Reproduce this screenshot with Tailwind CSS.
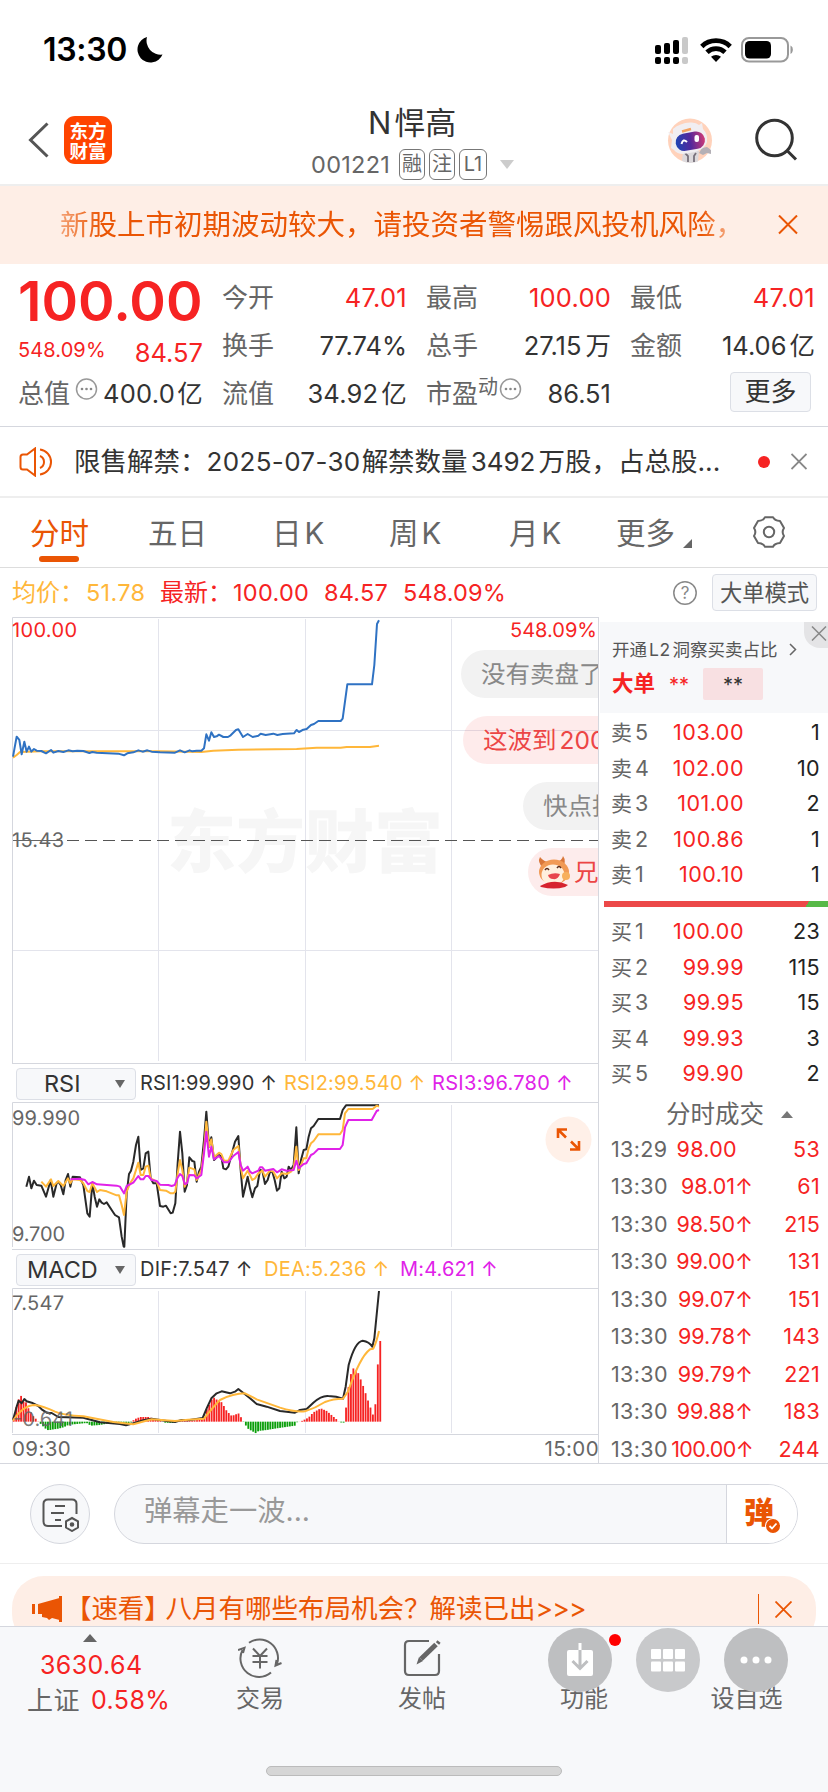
<!DOCTYPE html>
<html lang="zh-CN">
<head>
    <meta charset="UTF-8">
    <meta name="viewport" content="width=device-width, initial-scale=1.0">
    <title>N悍高 001221</title>
    <script src="https://cdn.jsdelivr.net/npm/@tailwindcss/browser@4"></script>
</head>
<body class="w-[828px] h-[1792px] overflow-hidden bg-white text-[#333] font-[Inter,'Noto_Sans_CJK_SC',sans-serif] leading-none whitespace-nowrap">
    <!-- Barre d'état -->
    <div class="h-[90px] pl-[43px] pr-[34px] pt-[10px] flex items-center justify-between text-black">
        <div class="flex items-center">
            <p class="w-[94px] text-[32px] font-semibold tracking-[-0.3px]">13:30</p>
            <svg width="26" height="26" viewBox="0 0 26 26"><path d="M10 0A13 13 0 1 0 25.500 17.500A14 14 0 0 1 10 0z" fill="#000"/></svg>
        </div>
        <div class="flex items-center">
            <svg width="34" height="27" viewBox="0 0 34 27">
                <rect x="0" y="8" width="6" height="9" rx="2"/><rect x="9" y="6" width="6" height="11" rx="2"/><rect x="18" y="3" width="6" height="14" rx="2"/><rect x="27" y="0" width="6" height="17" rx="2" fill="#c9c9c9"/>
                <rect x="0" y="20" width="6" height="7" rx="2"/><rect x="9" y="20" width="6" height="7" rx="2"/><rect x="18" y="20" width="6" height="7" rx="2"/><rect x="27" y="20" width="6" height="7" rx="2" fill="#c9c9c9"/>
            </svg>
            <svg class="ml-[11px]" width="32" height="24" viewBox="0 0 32 24" fill="none" stroke="#000" stroke-width="4.800">
                <path d="M1.800 8.400A20.500 20.500 0 0 1 30.200 8.400"/><path d="M7 14.200A13 13 0 0 1 25 14.200"/><path d="M16 24L11 18.800A7.500 7.500 0 0 1 21 18.800z" fill="#000" stroke="none"/>
            </svg>
            <svg class="ml-[9px]" width="53" height="26" viewBox="0 0 53 26">
                <rect x="1" y="1" width="46" height="23.500" rx="7" fill="none" stroke="#999" stroke-width="2"/><rect x="4" y="4" width="26" height="17.500" rx="4.500"/><path d="M49.500 8.500a5 5 0 0 1 0 8.500z" fill="#999"/>
            </svg>
        </div>
    </div>

    <!-- En-tête -->
    <div class="h-[94px] flex items-start">
        <svg class="ml-[27px] mt-[31px]" width="23" height="38" viewBox="0 0 23 38" fill="none" stroke="#555" stroke-width="3"><path d="M20.500 2.500L3.500 19L20.500 35.500"/></svg>
        <div class="ml-[14px] mt-[26px] size-12 rounded-[11px] bg-[#ff4400] text-white font-bold text-[18.500px] leading-[20px] pt-[4px] text-center font-['Noto_Sans_CJK_SC',sans-serif]">东方<br>财富</div>
        <div class="ml-[199px] w-[204px] flex flex-col">
            <p class="mt-[17px] h-8 text-[31px] leading-8 pl-[57px]">N<span class="ml-[3px]">悍高</span></p>
            <div class="mt-[10px] h-[31px] flex items-center text-[#666]">
                <p class="w-[88px] text-[23.500px] tracking-[0.3px] leading-[31px]">001221</p>
                <p class="w-[26px] h-[31px] border border-[#777] rounded-[6px] text-[20px] leading-[29px] text-center">融</p>
                <p class="ml-[4px] w-[26px] h-[31px] border border-[#777] rounded-[6px] text-[20px] leading-[29px] text-center">注</p>
                <p class="ml-[4px] w-[28px] h-[31px] border border-[#777] rounded-[6px] text-[20px] leading-[29px] text-center">L1</p>
                <svg class="ml-[13px]" width="14" height="9" viewBox="0 0 14 9"><path d="M0 0H14L7 9z" fill="#ccc"/></svg>
            </div>
        </div>
        <svg class="ml-[152px] mt-[27px]" width="48" height="48" viewBox="0 0 48 48">
            <circle cx="23" cy="23.500" r="22" fill="#ffd2bb"/>
            <path d="M16 34L15 44Q23 47.500 31 44.500L32 34z" fill="#dcd9dc"/>
            <path d="M18 36l3 3v6M29 36l-2 3v6" stroke="#77707a" stroke-width="1.800" fill="none"/>
            <path d="M32 36L36 38L40 36L44 37L44 33L40 30L35 31z" fill="#b4b0b6"/>
            <path d="M1 15L6 17V12Q13 6 23 5.500Q29 5 32 8L35 6L36 12Q41 17 40 25Q38 32 28 35L16 37Q10 37 7 33L4 31L5 23z" fill="#f1eef1"/>
            <rect x="8.500" y="15.500" width="29.500" height="17.500" rx="8.700" fill="url(#visor)" transform="rotate(-10 23 24)"/>
            <path d="M14.500 27q1.500-6 5.500-2" stroke="#fff" stroke-width="2" fill="none"/><rect x="27.500" y="18" width="4.500" height="7" rx="2" fill="#fff"/>
            <path d="M15 14.500L24 12" stroke="#f3a261" stroke-width="2.500"/>
            <defs><linearGradient id="visor"><stop offset="0" stop-color="#1f46b4"/><stop offset=".5" stop-color="#52289c"/><stop offset="1" stop-color="#cf3a76"/></linearGradient></defs>
        </svg>
        <svg class="ml-[40px] mt-[28px]" width="44" height="44" viewBox="0 0 44 44" fill="none" stroke="#333" stroke-width="3"><circle cx="19.500" cy="20" r="17.800"/><path d="M32 32.500L41 41.500"/></svg>
    </div>

    <!-- Avertissement -->
    <div class="h-[80px] border-t-2 border-[#eee] bg-[#feeee6] text-[#ea5504] flex items-center pl-[60px]">
        <p class="w-[690px] overflow-hidden text-[28.500px] leading-[44px] mask-[linear-gradient(to_right,rgb(0_0_0/.5),#000_6%,#000_93%,transparent)]">新股上市初期波动较大，请投资者警惕跟风投机风险，</p>
        <svg class="ml-[28px]" width="20" height="20" viewBox="0 0 20 20" stroke="#ea5504" stroke-width="2"><path d="M1 .500L19 18.500M19 .500L1 18.500"/></svg>
    </div>

    <!-- Cotation -->
    <div class="h-[163px] border-b border-[#d5d7de] pt-[10px] pl-[19px] grid grid-cols-[184px_185px_185px_185px] gap-x-[19px] grid-rows-[48px_48px_47px] items-center text-[25.500px]">
        <p class="-ml-[1px] text-[55.500px] font-semibold text-[#f62323] pt-[5px]">100.00</p>
        <div class="flex justify-between"><p class="text-[26px] text-[#666]">今开</p><p class="text-[#f62323] tracking-[0.3px]">47.01</p></div>
        <div class="flex justify-between"><p class="text-[26px] text-[#666]">最高</p><p class="text-[#f62323] tracking-[0.2px]">100.00</p></div>
        <div class="flex justify-between"><p class="text-[26px] text-[#666]">最低</p><p class="text-[#f62323] tracking-[0.3px]">47.01</p></div>

        <div class="flex justify-between items-center text-[#f62323] pt-[8px]"><p class="-ml-[1px] text-[20px] tracking-[0.1px]">548.09%</p><p class="pt-[5px]">84.57</p></div>
        <div class="flex justify-between"><p class="text-[26px] text-[#666]">换手</p><p>77.74%</p></div>
        <div class="flex justify-between"><p class="text-[26px] text-[#666]">总手</p><p>27.15<span class="ml-1">万</span></p></div>
        <div class="flex justify-between"><p class="text-[26px] text-[#666]">金额</p><p>14.06<span class="ml-[3px]">亿</span></p></div>

        <div class="flex justify-between"><p class="-ml-[1px] text-[26px] text-[#666]">总值</p>
            <svg class="-mt-[4px]" width="23" height="24" viewBox="0 0 23 24"><circle cx="11.500" cy="12" r="10" fill="none" stroke="#999" stroke-width="1.500"/><g fill="#888"><circle cx="7" cy="12" r="1.300"/><circle cx="11.500" cy="12" r="1.300"/><circle cx="16" cy="12" r="1.300"/></g></svg>
            <p class="tracking-[0.3px]">400.0<span class="ml-[2px]">亿</span></p></div>
        <div class="flex justify-between"><p class="text-[26px] text-[#666]">流值</p><p class="tracking-[0.2px]">34.92<span class="ml-[3px]">亿</span></p></div>
        <div class="flex justify-between"><div class="flex"><p class="text-[26px] text-[#666]">市盈</p><p class="text-[20px] text-[#666] -mt-[4px]">动</p>
            <svg class="-mt-[4px] ml-[1px]" width="23" height="24" viewBox="0 0 23 24"><circle cx="11.500" cy="12" r="10" fill="none" stroke="#999" stroke-width="1.500"/><g fill="#888"><circle cx="7" cy="12" r="1.300"/><circle cx="11.500" cy="12" r="1.300"/><circle cx="16" cy="12" r="1.300"/></g></svg></div>
            <p>86.51</p></div>
        <p class="justify-self-end mr-[4px] -mt-[3px] w-[81px] h-[40px] border border-[#dcdfe6] rounded-[4px] bg-[#f7f8fa] text-[26px] leading-[38px] text-center">更多</p>
    </div>

    <!-- Annonce -->
    <div class="h-[71px] border-b-2 border-[#eee] flex items-center">
        <svg class="ml-[19px]" width="36" height="30" viewBox="0 0 36 30" fill="none" stroke="#ea5504" stroke-width="2"><path d="M16 1.500V28.500L8 22.500H4Q1.500 22.500 1.500 20V10Q1.500 7.500 4 7.500H8z"/><path d="M21 9A6.500 6.500 0 0 1 21 21M21 2.500A12.600 12.600 0 0 1 21 27.500"/></svg>
        <p class="ml-[19px] w-[660px] text-[26.500px]">限售解禁：<span class="tracking-[0.35px] text-[26px]">2025-07-30</span><span class="ml-[1px]">解禁数量</span><span class="ml-[3px] text-[26px]">3492</span><span class="ml-[3px]">万股，占总股...</span></p>
        <div class="ml-[24px] size-[12px] rounded-full bg-[#f62323]"></div>
        <svg class="ml-[21px]" width="16" height="17" viewBox="0 0 16 17" stroke="#888" stroke-width="1.800"><path d="M.500 1L15.500 16M15.500 1L.500 16"/></svg>
    </div>

    <!-- Onglets -->
    <div class="h-[70px] border-b border-[#ddd] flex items-start text-[29.500px] leading-[70px] text-[#666]">
        <div class="ml-[30px] w-[118px] text-[#ea5504]"><p class="h-[58px]">分时</p><div class="ml-[9px] w-[40px] h-[6px] rounded-[3px] bg-[#ea5504]"></div></div>
        <p class="w-[124px]">五日</p>
        <p class="w-[117px]">日<span class="ml-[3px]">K</span></p>
        <p class="w-[120px]">周<span class="ml-[3px]">K</span></p>
        <p class="w-[107px]">月<span class="ml-[3px]">K</span></p>
        <p class="w-[67px]">更多</p>
        <svg class="mt-[41px]" width="9" height="9" viewBox="0 0 9 9"><path d="M9 0V9H0z" fill="#666"/></svg>
        <svg class="ml-[60px] mt-[18px]" width="34" height="32" viewBox="-17 -16 34 32" fill="none" stroke="#666" stroke-width="2" stroke-linejoin="round"><path d="M-4 -14.800H4Q5.500 -11.300 11 -11L15 -4Q12.300 0 15 4L11 11Q5.500 11.300 4 14.800H-4Q-5.500 11.300 -11 11L-15 4Q-12.300 0 -15 -4L-11 -11Q-5.500 -11.300 -4 -14.800z"/><circle r="5.200"/></svg>
    </div>

    <!-- Prix moyen et dernier prix -->
    <div class="h-[49px] flex items-center text-[23.500px] text-[#f62323]">
        <p class="ml-[12px] w-[74px] text-[#ffb73a] text-[24px]">均价：</p><p class="w-[74px] text-[#ffb73a] tracking-[0.3px]">51.78</p>
        <p class="w-[73px] text-[24px]">最新：</p><p class="w-[91px] tracking-[0.3px]">100.00</p><p class="w-[79px] tracking-[0.2px]">84.57</p><p class="w-[269px] tracking-[0.1px]">548.09%</p>
        <svg width="26" height="26" viewBox="0 0 26 26"><circle cx="13" cy="13" r="11.200" fill="none" stroke="#888" stroke-width="1.500"/><text x="13" y="19" text-anchor="middle" font-size="17" fill="#888">?</text></svg>
        <p class="ml-[14px] w-[105px] h-[37px] border border-[#dcdfe6] rounded-[4px] bg-[#f7f8fa] text-[#555] text-[22.300px] leading-[35px] text-center">大单模式</p>
    </div>

    <!-- Graphiques et carnet d'ordres -->
    <div class="h-[847px] flex border-b border-[#d5d7de]">
        <div class="w-[599px] pl-[12px] border-r border-[#d5d7de]">
            <svg class="block" width="586" height="447" viewBox="12 617 586 447" text-rendering="geometricPrecision">
                <g stroke="#e3e4ec"><path d="M158.500 619V1061M305.500 619V1061M451.500 619V1061M12 730.500H598M12 950.500H598"/></g>
                <text x="167" y="867" font-size="69" font-weight="900" fill="#f6f6f6" textLength="276">东方财富</text>
                <path d="M12.500 1064V617.500H598M12 1063.500H598" stroke="#d5d7de" fill="none"/>
                <path d="M13 840.500H62" stroke="#666"/><path d="M67 840.500H598" stroke="#555" stroke-dasharray="12 6"/>
                <text x="12" y="847" font-size="20" fill="#666" textLength="52">15.43</text>
                <text x="12" y="637" font-size="20" fill="#f62323" textLength="65">100.00</text>
                <text x="510" y="637" font-size="20" fill="#f62323" textLength="87">548.09%</text>
                <g transform="translate(0 600) scale(.33333)" fill="none" stroke-width="6" stroke-linejoin="round">
                    <polyline stroke="#ffb73a" points="39,473 50,465 60,456 124,454 300,454 480,454 604,456 640,452 715,449 890,447 950,443 1022,443 1040,441 1110,441 1137,437"/>
                    <polyline stroke="#2f72c3" points="39,470 50,410 58,420 65,463 73,425 80,455 87,440 94,455 102,447 110,452 124,453 138,460 153,450 160,458 175,453 190,456 205,451 218,454 232,452 250,453 268,459 277,456 290,458 355,461 372,466 382,460 400,457 415,451 428,455 442,451 455,455 480,457 525,458 540,451 554,457 569,451 577,454 590,452 604,452 612,445 619,403 627,422 634,397 642,411 650,409 657,404 670,411 684,411 692,406 708,390 715,388 729,411 743,402 758,411 775,407 782,401 797,405 820,401 832,405 848,402 882,400 890,390 897,396 910,389 920,387 933,375 942,372 955,363 1022,363 1028,356 1042,253 1116,253 1123,195 1131,72 1137,61"/>
                </g>
                <g font-size="24.500">
                    <rect x="461" y="650" width="180" height="48" rx="24" fill="#f2f2f2"/><text x="481" y="683" fill="#888">没有卖盘了</text>
                    <rect x="463" y="716" width="180" height="48" rx="24" fill="#fa3c3c" opacity=".1"/><text x="483" y="749" fill="#ec4545">这波到<tspan dx="3">200</tspan></text>
                    <rect x="523" y="782" width="180" height="48" rx="24" fill="#f2f2f2"/><text x="543" y="815" fill="#888">快点抄</text>
                    <rect x="528" y="848" width="180" height="48" rx="24" fill="#fdecec"/><text x="574" y="881" fill="#ec4545">兄弟</text>
                </g>
                <!-- petit boeuf -->
                <path d="M543 868Q537 862 540 857Q544 862 549 862zM556 862Q562 861 563 856Q567 861 562 869z" fill="#d9773a"/>
                <ellipse cx="554" cy="872" rx="15" ry="12.500" fill="#f19a55"/><ellipse cx="553" cy="875" rx="11.500" ry="10.500" fill="#fff0de"/>
                <path d="M540 886Q554 878 568 885L565 887Q554 890 541 887z" fill="#d6232f"/>
                <path d="M548 875Q554 872 560 874Q558 880 553 879Q549 879 548 875z" fill="#e8464c"/>
                <path d="M545 870q2-3 4 0M557 868q2-3 4 0" fill="none" stroke="#5b2b1b" stroke-width="1.500"/><circle cx="566" cy="876" r="4" fill="#f7b05c"/>
            </svg>
            <div class="h-[38px] flex items-center text-[20px]">
                <div class="ml-[4px] mt-[1px] w-[120px] h-[32px] border border-[#dcdfe6] rounded-[4px] bg-[#f7f8fa] flex items-center"><p class="w-[98px] pl-[27px] text-[23.500px]">RSI</p><svg width="10" height="8" viewBox="0 0 10 8"><path d="M0 0H10L5 8z" fill="#666"/></svg></div>
                <p class="ml-[4px] w-[144px] tracking-[0.2px]">RSI1:99.990 ↑</p><p class="w-[148px] text-[#ffb73a] tracking-[0.2px]">RSI2:99.540 ↑</p><p class="text-[#e022e8] tracking-[0.3px]">RSI3:96.780 ↑</p>
            </div>
            <svg class="block" width="586" height="147" viewBox="12 1102 586 147" text-rendering="geometricPrecision">
                <path d="M158.500 1105V1247M305.500 1105V1247M451.500 1105V1247" stroke="#e3e4ec"/>
                <path d="M12.500 1247V1102.500H598" stroke="#d5d7de" fill="none"/>
                <text x="12" y="1125" font-size="20" fill="#666" textLength="68">99.990</text>
                <text x="12" y="1241" font-size="20" fill="#666" textLength="53">9.700</text>
                <g transform="translate(0 1050) scale(.33333)" fill="none" stroke-width="6" stroke-linejoin="round">
                    <polyline stroke="#292929" points="79,410 87,380 94,415 102,392 110,405 124,407 138,440 152,390 160,440 170,400 175,395 182,405 190,433 197,390 204,372 211,410 218,380 240,382 250,405 262,490 269,500 277,400 284,440 291,470 298,448 305,458 312,462 320,457 335,480 345,495 357,502 365,560 371,590 373,590 380,430 387,372 393,362 400,335 408,285 415,260 422,360 430,355 437,310 445,305 452,385 460,400 470,400 480,468 490,470 498,467 512,490 518,488 526,460 533,340 540,245 547,310 554,425 561,405 568,322 577,333 583,335 590,395 597,365 604,350 612,270 619,185 627,290 634,262 642,330 657,315 664,320 670,355 678,358 685,350 693,320 705,275 715,258 722,360 729,440 736,410 743,380 750,415 757,442 765,415 772,408 780,360 787,362 795,402 803,390 810,365 817,365 824,390 831,422 838,415 845,365 853,385 860,380 866,350 873,360 881,345 889,232 896,370 903,330 911,300 919,298 926,260 933,235 941,228 955,207 1020,207 1028,180 1038,166 1137,166"/>
                    <polyline stroke="#ffb73a" points="124,395 138,410 153,388 160,408 175,393 190,408 204,385 211,400 218,388 240,390 250,400 262,423 269,426 277,400 291,426 300,420 320,424 350,436 357,436 365,465 372,495 380,425 390,400 400,385 415,338 422,375 430,375 437,350 445,347 452,385 470,395 480,420 498,422 512,430 520,430 526,425 533,370 540,330 547,360 554,410 561,395 568,353 583,358 590,390 604,360 612,300 619,215 627,290 634,268 642,322 657,308 664,312 672,332 685,332 700,300 715,288 722,350 729,385 743,362 757,390 765,385 775,370 787,362 795,380 810,362 820,365 831,385 845,370 860,372 873,365 881,355 889,290 896,360 903,345 911,325 919,325 926,295 933,280 941,273 955,253 1020,253 1028,240 1035,190 1045,177 1118,177 1130,167 1137,170"/>
                    <polyline stroke="#e022e8" points="211,388 240,386 255,390 265,403 277,396 291,403 350,407 360,410 372,430 380,408 400,398 415,378 422,388 430,388 437,378 445,378 455,390 470,393 480,404 505,405 515,408 524,405 532,385 540,372 547,378 554,402 561,400 568,375 583,376 590,385 604,375 612,310 619,245 627,320 634,290 642,328 657,318 672,337 685,337 700,318 715,306 722,345 729,362 743,350 750,365 757,370 775,362 780,352 787,352 795,362 820,357 831,367 845,358 860,362 881,360 889,332 896,355 911,342 919,340 933,315 941,311 955,297 1020,297 1028,285 1035,232 1045,210 1115,210 1130,183 1137,180"/>
                </g>
                <circle cx="568.500" cy="1139.500" r="23" fill="#fff0e8"/>
                <path d="M558 1138V1129.500H567M559 1130.500L566 1137.500M579 1141V1149.500H570M578 1148.500L571 1141.500" stroke="#ea5504" stroke-width="2.600" fill="none"/>
            </svg>
            <div class="h-[39px] border-t border-[#d5d7de] flex items-center text-[20px]">
                <div class="ml-[4px] mt-[1px] w-[120px] h-[32px] border border-[#dcdfe6] rounded-[4px] bg-[#f7f8fa] flex items-center"><p class="w-[98px] pl-[10px] text-[23.500px]">MACD</p><svg width="10" height="8" viewBox="0 0 10 8"><path d="M0 0H10L5 8z" fill="#666"/></svg></div>
                <p class="ml-[4px] w-[124px] tracking-[0.2px]">DIF:7.547 ↑</p><p class="w-[136px] text-[#ffb73a] tracking-[0.25px]">DEA:5.236 ↑</p><p class="text-[#e022e8] tracking-[0.15px]">M:4.621 ↑</p>
            </div>
            <svg class="block" width="586" height="147" viewBox="12 1288 586 147" text-rendering="geometricPrecision">
                <path d="M158.500 1291V1433M305.500 1291V1433M451.500 1291V1433" stroke="#e3e4ec"/>
                <path d="M12.500 1433V1288.500H598M12 1434.500H598" stroke="#d5d7de" fill="none"/>
                <g id="macd-bars" transform="translate(0 1250) scale(.33333)"></g>
                <g transform="translate(0 1250) scale(.33333)" fill="none" stroke-width="6" stroke-linejoin="round">
                    <path stroke="#292929" d="M39 510L50 470L56 452L65 460L73 447L80 454L95 458L115 468L125 478L140 488L155 489L175 501L250 503L300 517L360 522L378 526L400 520L430 511L455 506L500 513L525 516L545 510L565 511L608 504L620 475L634 445L650 430L665 424L690 430L705 425L715 417L735 433L750 445L770 462L800 470L840 483L885 488L900 480L920 477L940 458Q965 436 985 438Q1010 439 1029 446L1037 410L1046 345Q1065 275 1088 272Q1108 275 1117 290L1123 265L1137 123"/>
                    <path stroke="#ffb73a" d="M39 512Q70 465 105 465Q130 468 165 485Q190 496 250 499L340 516L400 523L455 508L525 513L565 509L612 506Q640 470 660 450Q700 430 735 430L770 448L840 473Q885 487 915 484Q945 475 975 456Q1000 446 1029 446L1044 425Q1080 320 1110 298L1120 296Q1130 275 1137 243"/>
                </g>
                <text x="12" y="1310" font-size="20" fill="#666" textLength="52">7.547</text>
                <text x="13" y="1426" font-size="20" fill="#666" fill-opacity=".85" textLength="60">-0.641</text>
            </svg>
            <div class="h-[28px] -mr-[1px] flex justify-between items-center text-[20.500px] text-[#666] tracking-[0.4px]"><p>09:30</p><p>15:00</p></div>
        </div>

        <!-- Carnet d'ordres -->
        <div class="w-[229px]">
            <div class="mt-[5px] ml-[1px] h-[91px] bg-[#f7f8fa] flex text-[#555]">
                <div class="pl-[12px] pt-[19px] w-[204px]">
                    <div class="flex items-center text-[17.500px]"><p class="w-[177px]">开通<span class="mx-[2px] tracking-[0.5px]">L2</span>洞察买卖占比</p><svg width="8" height="13" viewBox="0 0 8 13" fill="none" stroke="#666" stroke-width="1.500"><path d="M1 1L6.500 6.500L1 12"/></svg></div>
                    <div class="mt-[9px] flex items-center"><p class="w-[57px] text-[21.500px] font-bold text-[#f62323]">大单</p><p class="w-[34px] pt-[2px] text-[20px] text-[#f62323]">**</p><p class="w-[60px] h-[32px] rounded-[2px] bg-[#f8e0e2] text-[#333] text-[20px] leading-[34px] text-center">**</p></div>
                </div>
                <div class="w-[24px] h-[26px] rounded-bl-[16px] bg-[#e4e4e6] pl-[7px] pt-[4px]"><svg width="16" height="15" viewBox="0 0 16 15" stroke="#888" stroke-width="1.500"><path d="M1 .500L15 14.500M15 .500L1 14.500"/></svg></div>
            </div>
            <div class="mt-[2px] pl-[12px] text-[21.500px]" id="asks"></div>
            <div class="mt-[8px] ml-[5px] h-[6px] bg-[linear-gradient(125deg,#ec4848_90%,#57b947_90%)]"></div>
            <div class="mt-[7px] pl-[12px] text-[21.500px]" id="bids"></div>
            <div class="h-[39px] pt-[6px] pl-[67px] flex items-center text-[24.500px] text-[#666]"><p class="w-[115px]">分时成交</p><svg width="12" height="7" viewBox="0 0 12 7"><path d="M6 0L12 7H0z" fill="#777"/></svg></div>
            <div class="pl-[12px] text-[21.500px]" id="trades"></div>
        </div>
    </div>

    <!-- Saisie du commentaire -->
    <div class="h-[100px] border-b border-[#eee] flex items-center">
        <div class="ml-[30px] size-[60px] rounded-full border border-[#d5d7de] bg-[#f7f8fa] flex items-center justify-center">
            <svg class="ml-[2px] mt-[2px]" width="38" height="34" viewBox="0 0 38 34" fill="none" stroke="#555" stroke-width="2"><path d="M20 28H6Q1.500 28 1.500 23.500V6Q1.500 1.500 6 1.500H30Q34.500 1.500 34.500 6V16M13 8H23M9 15H22M13 22H19"/><path d="M30 20L36 23.300V29.500L30 33L24 29.500V23.300z"/><circle cx="30" cy="26.500" r="1.300" fill="#555"/></svg>
        </div>
        <div class="ml-[24px] w-[684px] h-[60px] rounded-full border border-[#d5d7de] bg-[#f7f8fa] flex overflow-hidden">
            <p class="w-[612px] border-r border-[#d5d7de] pl-[29px] text-[28.300px] leading-[53px] text-[#999]">弹幕走一波...</p>
            <div class="flex-1 bg-white relative text-[#ea5504]"><p class="pl-[17px] text-[30px] font-black leading-[54px]">弹</p>
                <svg class="absolute left-[38px] top-[33px]" width="16" height="16" viewBox="0 0 16 16"><circle cx="8" cy="8" r="8" fill="#fff"/><circle cx="8" cy="8" r="7" fill="#ea5504"/><path d="M4.500 8L7 10.500L11.500 5.500" fill="none" stroke="#fff" stroke-width="1.800"/></svg>
            </div>
        </div>
    </div>

    <!-- Promotion -->
    <div class="h-[62px] pt-[12px] px-[12px] overflow-hidden">
        <div class="h-[70px] rounded-[32px] bg-[#feeee6] text-[#ea5504] flex items-start">
            <svg class="ml-[20px] mt-[20px]" width="31" height="27" viewBox="0 0 31 27" fill="#ea5504"><rect x="0" y="8" width="3" height="10"/><path d="M6 8L27.500 2V24L20 22L17 24L15 22L10 21V18H6z"/><rect x="27" y="0" width="3" height="26"/></svg>
            <p class="ml-[2px] w-[693px] text-[26.500px] leading-[64px]"><span class="tracking-[-0.1px]">【速看】</span><span class="-ml-[5px]">八月有哪些布局机会？</span><span class="-ml-[1px]">解读已出</span><span class="tracking-[-0.8px]">&gt;&gt;&gt;</span></p>
            <div class="mt-[18px] w-[1px] h-[30px] bg-[#ea5504]"></div>
            <svg class="ml-[16px] mt-[25px]" width="17" height="17" viewBox="0 0 17 17" stroke="#ea5504" stroke-width="1.800"><path d="M.500 .500L16.500 16.500M16.500 .500L.500 16.500"/></svg>
        </div>
    </div>

    <!-- Barre de navigation -->
    <div class="relative h-[166px] border-t border-[#d5d7de] bg-[#f7f8fa] text-[24px] text-[#666]">
        <div class="flex">
            <div class="w-[179px] text-[#f62323] text-[25px] tracking-[0.4px]">
                <svg class="ml-[83px] mt-[7px]" width="14" height="8" viewBox="0 0 14 8"><path d="M7 0L14 8H0z" fill="#666"/></svg>
                <p class="ml-[40px] mt-[11px]">3630.64</p>
                <div class="ml-[27px] mt-[10px] flex"><p class="w-[64px] text-[26px] text-[#666]">上证</p><p>0.58%</p></div>
            </div>
            <div class="w-[162px] flex flex-col items-center">
                <svg class="mt-[11px]" width="44" height="40" viewBox="0 0 44 40" fill="none" stroke="#666" stroke-width="2"><path d="M11 4.800A18.500 18.500 0 0 1 39 26M33 34.500A18.500 18.500 0 0 1 4.500 12M0 12L6.500 9.800L5 15M43.500 25L37.500 27.500L38.500 22"/><path d="M15 10.500L22 18L29 10.500M22 18V30.500M14.500 18H29.500M14.500 24H29.500"/></svg>
                <p class="mt-[9px]">交易</p>
            </div>
            <div class="w-[162px] flex flex-col items-center">
                <svg class="mt-[12px]" width="38" height="38" viewBox="0 0 38 38" fill="none" stroke="#666" stroke-width="2.200"><path d="M26 2H6Q2 2 2 6V32Q2 36 6 36H32Q36 36 36 32V15"/><path d="M33 5.500L18 20" stroke-width="5"/><path d="M13.500 25.500L16 18L20 22z" fill="#666" stroke="none"/><path d="M34.500 4.500L36 2.500" stroke-width="4"/></svg>
                <p class="mt-[10px]">发帖</p>
            </div>
            <p class="w-[162px] pt-[60px] text-center">功能</p>
            <p class="w-[163px] pt-[60px] text-center">设自选</p>
        </div>
        <!-- boutons flottants -->
        <div class="absolute left-[548px] top-[1px] flex gap-6">
            <svg width="64" height="64" viewBox="0 0 64 64"><circle cx="32" cy="32" r="32" fill="#bebfc1"/><rect x="19" y="22" width="26" height="26" rx="2" fill="#fff"/><path d="M32 15V22" stroke="#fff" stroke-width="3"/><path d="M32 22V40M24.500 33L32 40.500L39.500 33" stroke="#bebfc1" stroke-width="3" fill="none"/></svg>
            <svg width="64" height="64" viewBox="0 0 64 64"><circle cx="32" cy="32" r="32" fill="#c8c9cb"/><g fill="#fff"><rect x="15" y="21" width="10" height="10" rx="1"/><rect x="27" y="21" width="10" height="10" rx="1"/><rect x="39" y="21" width="10" height="10" rx="1"/><rect x="15" y="33.500" width="10" height="10" rx="1"/><rect x="27" y="33.500" width="10" height="10" rx="1"/><rect x="39" y="33.500" width="10" height="10" rx="1"/></g></svg>
            <svg width="64" height="64" viewBox="0 0 64 64"><circle cx="32" cy="32" r="32" fill="#bebfc1"/><g fill="#fff"><circle cx="20" cy="32" r="3.500"/><circle cx="32" cy="32" r="3.500"/><circle cx="44" cy="32" r="3.500"/></g></svg>
        </div>
        <div class="absolute left-[609px] top-[7px] size-[12px] rounded-full bg-[#ff0000]"></div>
        <div class="absolute left-[266px] top-[139px] w-[296px] h-[10px] rounded-full bg-[#d6d6d6] border border-[#bbb]"></div>
    </div>

    <script>
        const asks = [['卖', 5, '103.00', 1], ['卖', 4, '102.00', 10], ['卖', 3, '101.00', 2], ['卖', 2, '100.86', 1], ['卖', 1, '100.10', 1]];
        const bids = [['买', 1, '100.00', 23], ['买', 2, '99.99', 115], ['买', 3, '99.95', 15], ['买', 4, '99.93', 3], ['买', 5, '99.90', 2]];
        const trades = [
            ['13:29', '98.00', 53], ['13:30', '98.01↑', 61], ['13:30', '98.50↑', 215], ['13:30', '99.00↑', 131], ['13:30', '99.07↑', 151],
            ['13:30', '99.78↑', 143], ['13:30', '99.79↑', 221], ['13:30', '99.88↑', 183], ['13:30', '100.00↑', 244]
        ];

        function displayOrders(id, orders) {
            document.getElementById(id).innerHTML = orders.map(([side, n, price, volume]) => `
                <div class="h-[35.6px] flex items-center text-[#222]">
                    <p class="w-[50px] text-[21px] text-[#666]">${side}<span class="ml-[3px] text-[21.500px]">${n}</span></p>
                    <p class="w-[83px] text-right text-[#f62323] tracking-[0.5px]">${price}</p>
                    <p class="w-[76px] text-right tracking-[0.3px]">${volume}</p>
                </div>`).join('');
        }
        displayOrders('asks', asks);
        displayOrders('bids', bids);

        document.getElementById('trades').innerHTML = trades.map(([time, price, volume], i) => `
            <div class="h-[37.5px] flex items-center text-[#f62323]">
                <p class="w-[56px] text-[#666] tracking-[0.35px]">${time}</p>
                <p class="${i ? 'w-[86px]' : 'w-[70px] mr-[16px] tracking-[0.3px]'} ${price.length > 6 ? 'tracking-[-0.6px]' : ''} text-right">${price}</p>
                <p class="w-[67px] text-right tracking-[0.3px]">${volume}</p>
            </div>`).join('');

        // Histogramme MACD : points [x, hauteur], une barre par minute
        const points = [[39, 5], [50, 50], [61, 83], [69, 60], [76, 62], [84, 42], [91, 30], [98, 18], [106, 10], [113, 2], [120, -5], [135, -20], [145, -26], [160, -23], [175, -21], [190, -17], [205, -10], [220, -8], [260, -4], [272, -12], [300, -10], [330, -4], [390, -5], [397, 2], [405, 8], [420, 14], [445, 14], [460, 9], [476, 5], [485, 1], [495, -3], [520, -4], [535, 4], [545, 5], [560, 2], [605, 6], [612, 12], [619, 35], [627, 50], [634, 66], [642, 72], [650, 66], [665, 58], [680, 32], [695, 17], [715, 25], [725, 10], [731, -3], [745, -22], [768, -35], [775, -28], [800, -25], [830, -20], [885, -12], [890, -2], [905, 2], [925, 12], [940, 28], [962, 40], [980, 32], [1000, 15], [1012, 5], [1018, -2], [1033, -3], [1037, 35], [1046, 110], [1053, 145], [1060, 160], [1075, 145], [1090, 105], [1105, 60], [1119, 20], [1126, 53], [1133, 170], [1140, 242], [1142, 242]];
        let bars = '';
        for (let i = 0; i <= 150; i++) {
            const x = 41 + i * 7.33;
            const k = points.findIndex(p => p[0] >= x);
            if (k < 1) continue;
            const [x0, h0] = points[k - 1], [x1, h1] = points[k];
            const h = h0 + (h1 - h0) * (x - x0) / (x1 - x0);
            bars += `<rect x="${x - 2.5}" y="${h > 0 ? 515 - h : 515}" width="5.5" height="${Math.abs(h)}" fill="${h > 0 ? '#f62323' : '#0a9f0a'}"/>`;
        }
        document.getElementById('macd-bars').innerHTML = bars;
    </script>
</body>
</html>
